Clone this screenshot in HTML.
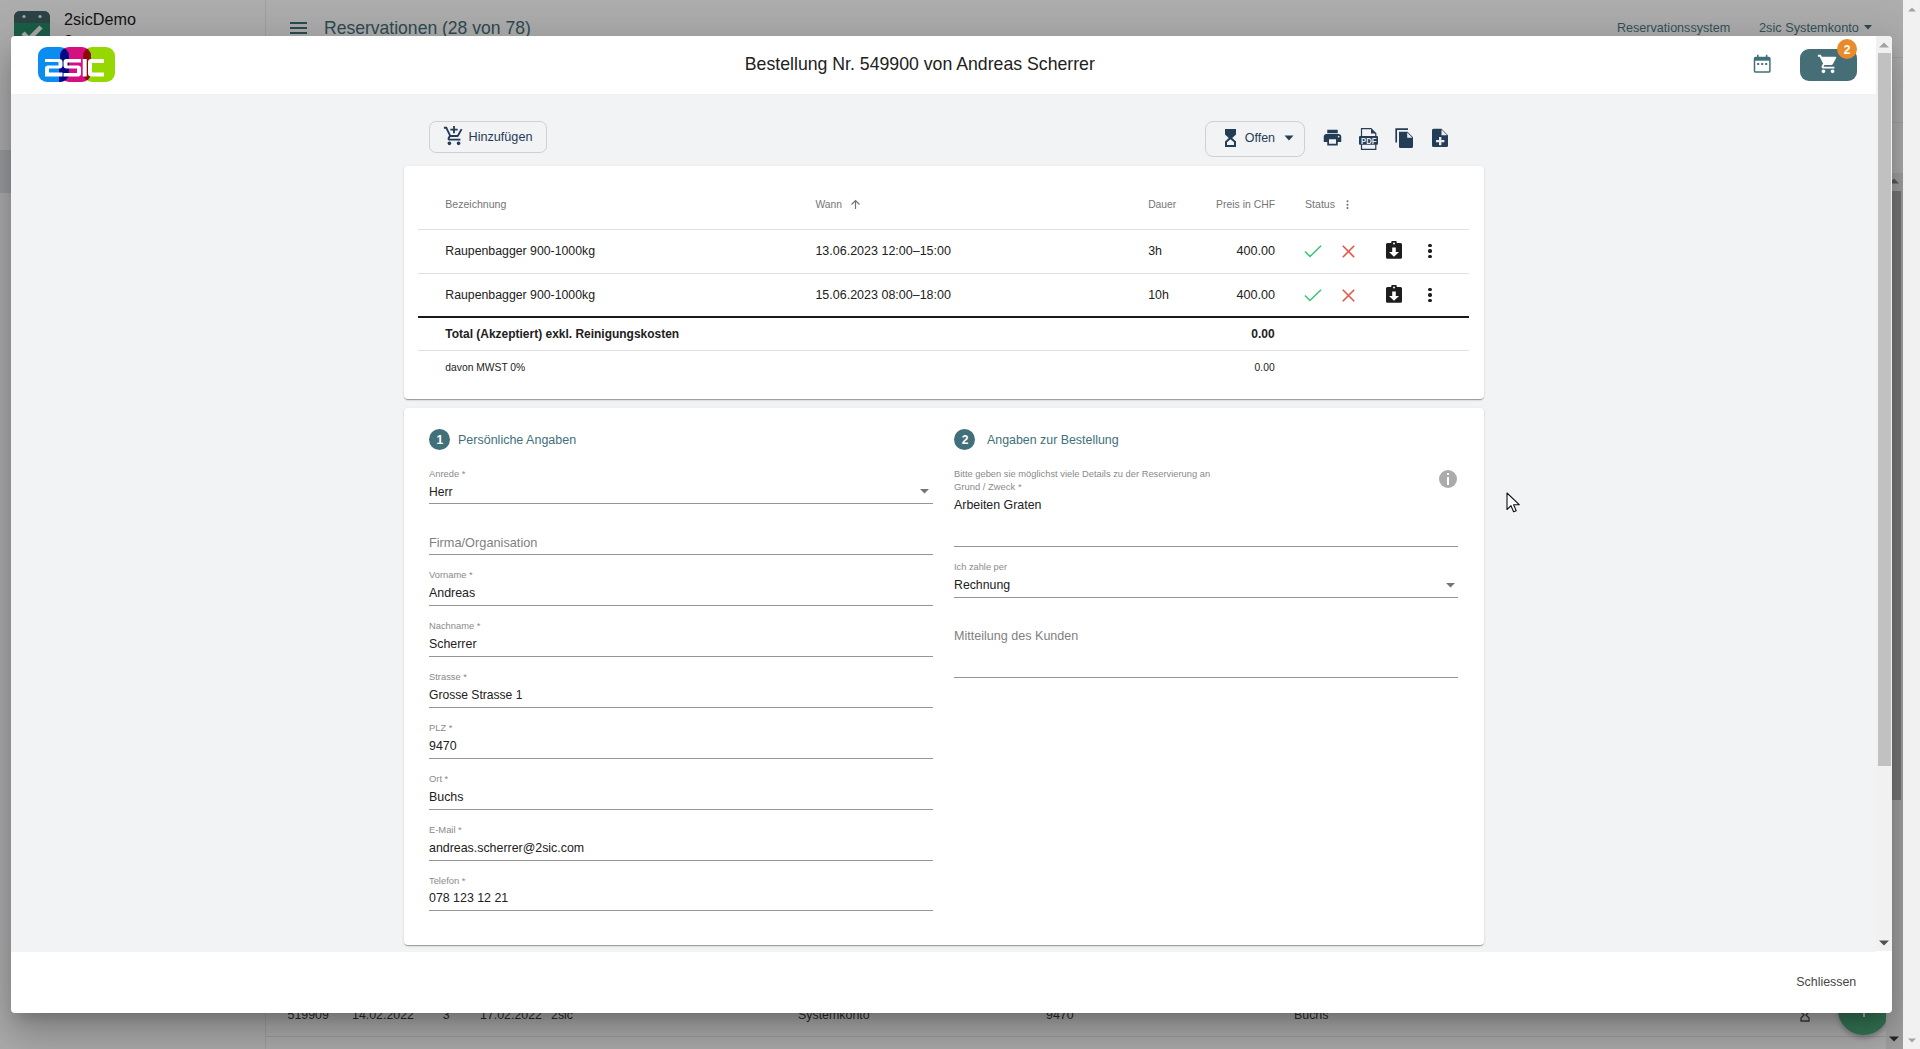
<!DOCTYPE html>
<html><head><meta charset="utf-8"><title>Bestellung</title>
<style>
html,body{margin:0;padding:0;width:1920px;height:1049px;overflow:hidden;background:#adadad;font-family:"Liberation Sans", sans-serif;}
.r{position:absolute;}
.t{position:absolute;line-height:20px;height:20px;white-space:nowrap;font-family:"Liberation Sans", sans-serif;}
</style></head><body>

<div class="r" style="left:0px;top:0px;width:1903px;height:1049px;background:#adadad;"></div>
<div class="r" style="left:0px;top:150px;width:265px;height:43px;background:#9a9c9f;"></div>
<div class="r" style="left:265px;top:0px;width:1px;height:1049px;background:#a0a0a0;"></div>
<div class="r" style="left:266px;top:57px;width:1637px;height:1px;background:#a2a2a2;"></div>
<div class="r" style="left:266px;top:122px;width:1637px;height:1px;background:#a2a2a2;"></div>
<div class="r" style="left:266px;top:173px;width:1637px;height:1px;background:#a2a2a2;"></div>
<svg class="r" style="left:14px;top:11px;" width="36" height="36" viewBox="0 0 36 36"><rect x="0" y="0" width="36" height="36" rx="6" fill="#1b5e47"/>
<path d="M6 0h24a6 6 0 0 1 6 6v6H0V6a6 6 0 0 1 6-6z" fill="#2c4346"/>
<circle cx="10" cy="5.5" r="1.6" fill="#a9a9a9"/><circle cx="26" cy="5.5" r="1.6" fill="#a9a9a9"/>
<path d="M9 22l6 6 12-12" stroke="#a9a9a9" stroke-width="4.5" fill="none"/></svg>
<div class="t" style="left:64px;top:9.39px;font-size:16.2px;color:#141414;font-weight:400;">2sicDemo</div>
<div class="t" style="left:64.5px;top:29.64px;font-size:12px;color:#141414;font-weight:400;">Sama</div>
<div class="r" style="left:290px;top:22px;width:17px;height:2px;background:#2b4b52;"></div>
<div class="r" style="left:290px;top:27px;width:17px;height:2px;background:#2b4b52;"></div>
<div class="r" style="left:290px;top:32px;width:17px;height:2px;background:#2b4b52;"></div>
<div class="t" style="left:324px;top:17.52px;font-size:17.56px;color:#2d4b53;font-weight:400;">Reservationen (28 von 78)</div>
<div class="t" style="left:1617px;top:17.64px;font-size:12.58px;color:#34525a;font-weight:400;">Reservationssystem</div>
<div class="t" style="left:1759px;top:17.58px;font-size:12.76px;color:#34525a;font-weight:400;">2sic Systemkonto</div>
<svg class="r" style="left:1864px;top:25px;" width="8" height="5" viewBox="0 0 8 5"><path d="M0 0h8L4 4.5z" fill="#2d4b53"/></svg>
<div class="t" style="left:287.5px;top:1005.20px;font-size:12.4px;color:#2a2a2a;font-weight:400;">519909</div>
<div class="t" style="left:352px;top:1005.20px;font-size:12.4px;color:#2a2a2a;font-weight:400;">14.02.2022</div>
<div class="t" style="left:442.7px;top:1005.20px;font-size:12.4px;color:#2a2a2a;font-weight:400;">3</div>
<div class="t" style="left:480px;top:1005.20px;font-size:12.4px;color:#2a2a2a;font-weight:400;">17.02.2022</div>
<div class="t" style="left:551px;top:1005.20px;font-size:12.4px;color:#2a2a2a;font-weight:400;">2sic</div>
<div class="t" style="left:798px;top:1005.20px;font-size:12.4px;color:#2a2a2a;font-weight:400;">Systemkonto</div>
<div class="t" style="left:1046px;top:1005.20px;font-size:12.4px;color:#2a2a2a;font-weight:400;">9470</div>
<div class="t" style="left:1294px;top:1005.20px;font-size:12.4px;color:#2a2a2a;font-weight:400;">Buchs</div>
<div class="r" style="left:266px;top:1036px;width:1620px;height:1px;background:#9c9c9c;"></div>
<svg class="r" style="left:1800px;top:1008px;" width="10" height="14" viewBox="0 0 10 14"><path d="M1 1h8v3L6 7l3 3v3H1v-3l3-3-3-3z" stroke="#3a3a3a" stroke-width="1.3" fill="none"/></svg>
<div class="r" style="left:1837.5px;top:984px;width:51px;height:51px;border-radius:50%;background:#357657;box-shadow:0 3px 5px rgba(0,0,0,.25)"></div>
<div class="r" style="left:1862.5px;top:1013px;width:2.0px;height:4px;background:#b5b5b5;"></div>
<div class="r" style="left:1886px;top:173px;width:17px;height:876px;background:#a1a1a1;"></div>
<div class="r" style="left:1888px;top:191px;width:13px;height:609px;background:#787878;"></div>
<svg class="r" style="left:1889px;top:178px;" width="10" height="6" viewBox="0 0 10 6"><path d="M0 5.5h10L5 0.5z" fill="#5a5a5a"/></svg>
<svg class="r" style="left:1889px;top:1036px;" width="10" height="6" viewBox="0 0 10 6"><path d="M0 0.5h10L5 5.5z" fill="#262626"/></svg>
<div class="r" style="left:11px;top:36px;width:1881px;height:977px;border-radius:4px;background:#fff;overflow:hidden;box-shadow:0 11px 15px -7px rgba(0,0,0,.2),0 24px 38px 3px rgba(0,0,0,.14),0 9px 46px 8px rgba(0,0,0,.12)">
<div class="r" style="left:0;top:58px;width:1865px;height:858px;background:#f2f3f5"></div>
</div>
<div class="r" style="left:1876px;top:36px;width:16px;height:915px;background:#f1f1f1;border-top-right-radius:4px;"></div>
<div class="r" style="left:1878px;top:53px;width:13px;height:713px;background:#c1c1c1;"></div>
<svg class="r" style="left:1879px;top:42px;" width="10" height="6" viewBox="0 0 10 6"><path d="M0 5.5h10L5 0.5z" fill="#a3a3a3"/></svg>
<svg class="r" style="left:1879px;top:940px;" width="10" height="6" viewBox="0 0 10 6"><path d="M0 0.5h10L5 5.5z" fill="#505050"/></svg>
<svg class="r" style="left:38px;top:47px;" width="77" height="35" viewBox="0 0 77 35">
<defs><clipPath id="cb"><rect x="0" y="0" width="31" height="35" rx="9"/></clipPath>
<clipPath id="cg"><rect x="45" y="0" width="32" height="35" rx="9"/></clipPath></defs>
<rect x="0" y="0" width="31" height="35" rx="9" fill="#0a8cf0"/>
<rect x="45" y="0" width="32" height="35" rx="9" fill="#97d700"/>
<rect x="22" y="0" width="31" height="35" rx="9" fill="#d50f7f"/>
<g clip-path="url(#cb)"><rect x="22" y="0" width="31" height="35" rx="9" fill="#000a85"/><rect x="21" y="18" width="11" height="17" fill="#000a85"/></g>
<g clip-path="url(#cg)"><rect x="22" y="0" width="31" height="35" rx="9" fill="#8a0d05"/></g>
<g fill="#fff">
<path d="M7 12h14.5a3 3 0 0 1 3 3v3.5a3 3 0 0 1-3 3H11v4h13.5v4H7v-8a3 3 0 0 1 3-3h10.5v-3.5H7z"/>
<path d="M43 12H28.5a3 3 0 0 0-3 3v3.5a3 3 0 0 0 3 3H39v4.5H25.5v3.5H40a3 3 0 0 0 3-3v-5a3 3 0 0 0-3-3H29.5v-3H43z"/>
<rect x="44.7" y="12" width="4" height="17.5"/>
<path d="M66 12H53a3 3 0 0 0-3 3v11.5a3 3 0 0 0 3 3h13v-4H54v-9.5h12z"/>
</g></svg>
<div class="t" style="left:744.8px;top:54.17px;font-size:17.7px;color:#212121;font-weight:400;">Bestellung Nr. 549900 von Andreas Scherrer</div>
<svg class="r" style="left:1753px;top:54px;" width="19" height="20" viewBox="0 0 19 20"><rect x="1.5" y="3.5" width="15.4" height="14.6" rx="1.2" stroke="#41707a" stroke-width="1.5" fill="none"/>
<rect x="1.5" y="3.5" width="15.4" height="3.2" fill="#41707a"/>
<rect x="4" y="0.8" width="1.6" height="3" fill="#41707a"/><rect x="12.8" y="0.8" width="1.6" height="3" fill="#41707a"/>
<rect x="4.2" y="9" width="2" height="2" fill="#41707a"/><rect x="8.2" y="9" width="2" height="2" fill="#41707a"/><rect x="12.2" y="9" width="2" height="2" fill="#41707a"/></svg>
<div class="r" style="left:1800px;top:49px;width:57px;height:32px;border-radius:9px;background:#456e76"></div>
<svg class="r" style="left:1817px;top:53px;" width="22" height="22" viewBox="0 0 24 24"><path fill="#fff" d="M7 18c-1.1 0-1.99.9-1.99 2S5.9 22 7 22s2-.9 2-2-.9-2-2-2zM1 2v2h2l3.6 7.59-1.35 2.45c-.16.28-.25.61-.25.96 0 1.1.9 2 2 2h12v-2H7.42c-.14 0-.25-.11-.25-.25l.03-.12.9-1.63h7.45c.75 0 1.41-.41 1.75-1.03l3.58-6.49A1.003 1.003 0 0 0 20 4H5.21l-.94-2H1zm16 16c-1.1 0-1.99.9-1.99 2s.89 2 1.99 2 2-.9 2-2-.9-2-2-2z"/></svg>
<div class="r" style="left:1837px;top:39px;width:20px;height:20px;border-radius:50%;background:#e98a2b"></div>
<div class="t" style="left:1847px;transform:translateX(-50%);top:39.84px;font-size:12px;color:#fff;font-weight:700;">2</div>
<div class="r" style="left:429px;top:121px;width:116px;height:30px;border:1px solid #cfd0d2;border-radius:7px"></div>
<svg class="r" style="left:443px;top:125px;" width="22" height="22" viewBox="0 0 24 24"><path fill="#1f3b57" d="M11 9h2V6h3V4h-3V1h-2v3H8v2h3v3zm-4 9c-1.1 0-1.99.9-1.99 2S5.9 22 7 22s2-.9 2-2-.9-2-2-2zm10 0c-1.1 0-1.99.9-1.99 2s.89 2 1.99 2 2-.9 2-2-.9-2-2-2zm-9.83-3.25l.03-.12.9-1.63h7.45c.75 0 1.41-.41 1.75-1.03l3.86-7.01L19.42 4h-.01l-1.1 2-2.76 5H8.53l-.13-.27L6.16 6l-.95-2-.94-2H1v2h2l3.6 7.59-1.35 2.45c-.16.28-.25.61-.25.96 0 1.1.9 2 2 2h12v-2H7.42c-.13 0-.25-.11-.25-.25z"/></svg>
<div class="t" style="left:468.5px;top:126.62px;font-size:12.65px;color:#1f3b57;font-weight:400;">Hinzufügen</div>
<div class="r" style="left:1205px;top:121px;width:98px;height:34px;border:1px solid #cfd0d2;border-radius:8px"></div>
<svg class="r" style="left:1225px;top:129px;" width="11" height="18" viewBox="0 0 11 18"><path fill="#243d57" d="M0 0h11v5.5L7.2 9 11 12.5V18H0v-5.5L3.8 9 0 5.5z"/><path fill="#f2f3f5" d="M2 13.3L5.5 10.2 9 13.3V16H2z"/></svg>
<div class="t" style="left:1244.7px;top:127.57px;font-size:12.5px;color:#243d57;font-weight:400;">Offen</div>
<svg class="r" style="left:1284px;top:135px;" width="10" height="6" viewBox="0 0 10 6"><path d="M0.5 0.5h9L5 5.5z" fill="#243d57"/></svg>
<svg class="r" style="left:1322px;top:127px;" width="21" height="21" viewBox="0 0 24 24"><path fill="#243d57" d="M19 8H5c-1.66 0-3 1.34-3 3v6h4v4h12v-4h4v-6c0-1.66-1.34-3-3-3zm-3 11H8v-5h8v5zm3-7c-.55 0-1-.45-1-1s.45-1 1-1 1 .45 1 1-.45 1-1 1zm-1-9H6v4h12V3z"/></svg>
<svg class="r" style="left:1358px;top:128px;" width="21" height="22" viewBox="0 0 21 22"><path d="M3.5 0.7h9.5l4.8 4.8V21.3H3.5z" fill="none" stroke="#243d57" stroke-width="1.2"/>
<path d="M13 0.7v4.8h4.8z" fill="#243d57"/>
<rect x="1" y="8" width="19" height="8.7" rx="1" fill="#243d57"/>
<text x="10.8" y="15.8" font-family="Liberation Sans" font-weight="700" font-size="9" fill="#e8eaee" text-anchor="middle" textLength="15.5" lengthAdjust="spacingAndGlyphs">PDF</text></svg>
<svg class="r" style="left:1394px;top:127px;" width="20" height="22" viewBox="0 0 20 22"><path d="M2.2 15.6V2.2H14" fill="none" stroke="#243d57" stroke-width="1.7"/><path fill="#243d57" d="M5 4.8h8.5L19 10.3v9.2a1.5 1.5 0 0 1-1.5 1.5h-11A1.5 1.5 0 0 1 5 19.5z"/><path fill="#e8eaee" d="M13.2 5.6v5.2h5.2z"/></svg>
<svg class="r" style="left:1432px;top:128px;" width="17" height="20" viewBox="0 0 17 20"><path fill="#243d57" d="M1.5 0.8H9.5L16 7.3V17.5a1.5 1.5 0 0 1-1.5 1.5h-13A1.5 1.5 0 0 1 0 17.5V2.3A1.5 1.5 0 0 1 1.5 0.8z"/><path fill="#e8eaee" d="M9.5 1.6v5.7h5.7z"/><path fill="#e8eaee" d="M7 9h2.4v3h3v2.2h-3v3H7v-3H4v-2.2h3z"/></svg>
<div class="r" style="left:404px;top:166px;width:1080px;height:233px;box-shadow:0 2px 1px -1px rgba(0,0,0,.2),0 1px 1px 0 rgba(0,0,0,.14),0 1px 3px 0 rgba(0,0,0,.12);border-radius:4px;background:#fff;"></div>
<div class="t" style="left:445.3px;top:194.34px;font-size:10.55px;color:#757575;font-weight:400;">Bezeichnung</div>
<div class="t" style="left:815.4px;top:195.03px;font-size:10.3px;color:#757575;font-weight:400;">Wann</div>
<svg class="r" style="left:850px;top:199px;" width="11" height="11" viewBox="0 0 11 11"><path d="M5.5 10V1.5M1.5 5.5l4-4 4 4" stroke="#757575" stroke-width="1.2" fill="none"/></svg>
<div class="t" style="left:1148.2px;top:195.03px;font-size:10.3px;color:#757575;font-weight:400;">Dauer</div>
<div class="t" style="right:645px;top:195.00px;font-size:10.4px;color:#757575;font-weight:400;">Preis in CHF</div>
<div class="t" style="left:1305px;top:194.33px;font-size:10.6px;color:#757575;font-weight:400;">Status</div>
<svg class="r" style="left:1346px;top:200px;" width="3" height="10" viewBox="0 0 3 10"><circle cx="1.5" cy="1.3" r="1" fill="#6a6a6a"/><circle cx="1.5" cy="4.7" r="1" fill="#6a6a6a"/><circle cx="1.5" cy="8.1" r="1" fill="#6a6a6a"/></svg>
<div class="r" style="left:418px;top:229px;width:1051px;height:1px;background:#e0e0e0;"></div>
<div class="r" style="left:418px;top:273px;width:1051px;height:1px;background:#e0e0e0;"></div>
<div class="t" style="left:445.3px;top:240.84px;font-size:12.3px;color:#212121;font-weight:400;">Raupenbagger 900-1000kg</div>
<div class="t" style="left:815.4px;top:241.47px;font-size:12.5px;color:#212121;font-weight:400;">13.06.2023 12:00–15:00</div>
<div class="t" style="left:1148.2px;top:240.80px;font-size:12.4px;color:#212121;font-weight:400;">3h</div>
<div class="t" style="right:645px;top:241.43px;font-size:12.6px;color:#212121;font-weight:400;">400.00</div>
<svg class="r" style="left:1304px;top:245px;" width="18" height="13" viewBox="0 0 18 13"><path d="M1 6.5l5 5L17 0.8" stroke="#3cc47c" stroke-width="1.6" fill="none"/></svg>
<svg class="r" style="left:1342px;top:245px;" width="13" height="13" viewBox="0 0 13 13"><path d="M0.8 0.8l11.4 11.4M12.2 0.8L0.8 12.2" stroke="#e8534a" stroke-width="1.6" fill="none"/></svg>
<svg class="r" style="left:1385px;top:241px;" width="18" height="19" viewBox="0 0 18 19"><path fill="#1d1d1d" d="M2.5 2h3.7a2.8 2.8 0 0 1 5.6 0h3.7a1.5 1.5 0 0 1 1.5 1.5V16.3a1.5 1.5 0 0 1-1.5 1.5H2.5A1.5 1.5 0 0 1 1 16.3V3.5A1.5 1.5 0 0 1 2.5 2z"/><circle cx="9" cy="2.4" r="1" fill="#fff"/><path fill="#fff" d="M7.2 6.6h3.6V11h3.2L9 15.8 4 11h3.2z"/></svg>
<div class="r" style="left:1428.4px;top:243.70px;width:3.4px;height:3.4px;border-radius:50%;background:#1d1d1d"></div>
<div class="r" style="left:1428.4px;top:249.30px;width:3.4px;height:3.4px;border-radius:50%;background:#1d1d1d"></div>
<div class="r" style="left:1428.4px;top:254.90px;width:3.4px;height:3.4px;border-radius:50%;background:#1d1d1d"></div>
<div class="t" style="left:445.3px;top:284.84px;font-size:12.3px;color:#212121;font-weight:400;">Raupenbagger 900-1000kg</div>
<div class="t" style="left:815.4px;top:285.47px;font-size:12.5px;color:#212121;font-weight:400;">15.06.2023 08:00–18:00</div>
<div class="t" style="left:1148.2px;top:284.80px;font-size:12.4px;color:#212121;font-weight:400;">10h</div>
<div class="t" style="right:645px;top:285.43px;font-size:12.6px;color:#212121;font-weight:400;">400.00</div>
<svg class="r" style="left:1304px;top:289px;" width="18" height="13" viewBox="0 0 18 13"><path d="M1 6.5l5 5L17 0.8" stroke="#3cc47c" stroke-width="1.6" fill="none"/></svg>
<svg class="r" style="left:1342px;top:289px;" width="13" height="13" viewBox="0 0 13 13"><path d="M0.8 0.8l11.4 11.4M12.2 0.8L0.8 12.2" stroke="#e8534a" stroke-width="1.6" fill="none"/></svg>
<svg class="r" style="left:1385px;top:285px;" width="18" height="19" viewBox="0 0 18 19"><path fill="#1d1d1d" d="M2.5 2h3.7a2.8 2.8 0 0 1 5.6 0h3.7a1.5 1.5 0 0 1 1.5 1.5V16.3a1.5 1.5 0 0 1-1.5 1.5H2.5A1.5 1.5 0 0 1 1 16.3V3.5A1.5 1.5 0 0 1 2.5 2z"/><circle cx="9" cy="2.4" r="1" fill="#fff"/><path fill="#fff" d="M7.2 6.6h3.6V11h3.2L9 15.8 4 11h3.2z"/></svg>
<div class="r" style="left:1428.4px;top:287.70px;width:3.4px;height:3.4px;border-radius:50%;background:#1d1d1d"></div>
<div class="r" style="left:1428.4px;top:293.30px;width:3.4px;height:3.4px;border-radius:50%;background:#1d1d1d"></div>
<div class="r" style="left:1428.4px;top:298.90px;width:3.4px;height:3.4px;border-radius:50%;background:#1d1d1d"></div>
<div class="r" style="left:418px;top:316px;width:1051px;height:2px;background:#1a1a1a;"></div>
<div class="t" style="left:445.3px;top:324.15px;font-size:11.97px;color:#212121;font-weight:700;">Total (Akzeptiert) exkl. Reinigungskosten</div>
<div class="t" style="right:645.4000000000001px;top:323.64px;font-size:12.0px;color:#212121;font-weight:700;">0.00</div>
<div class="r" style="left:418px;top:350px;width:1051px;height:1px;background:#e0e0e0;"></div>
<div class="t" style="left:445.3px;top:357.53px;font-size:10.3px;color:#212121;font-weight:400;">davon MWST 0%</div>
<div class="t" style="right:645.4000000000001px;top:358.03px;font-size:10.3px;color:#212121;font-weight:400;">0.00</div>
<div class="r" style="left:404px;top:408px;width:1080px;height:537px;box-shadow:0 2px 1px -1px rgba(0,0,0,.2),0 1px 1px 0 rgba(0,0,0,.14),0 1px 3px 0 rgba(0,0,0,.12);border-radius:4px;background:#fff;"></div>
<div class="r" style="left:429px;top:429px;width:21px;height:21px;border-radius:50%;background:#41707a"></div>
<div class="t" style="left:439.8px;transform:translateX(-50%);top:430.04px;font-size:12px;color:#fff;font-weight:700;">1</div>
<div class="t" style="left:458px;top:429.67px;font-size:12.5px;color:#41707a;font-weight:400;">Persönliche Angaben</div>
<div class="r" style="left:954px;top:429px;width:21px;height:21px;border-radius:50%;background:#41707a"></div>
<div class="t" style="left:965px;transform:translateX(-50%);top:430.04px;font-size:12px;color:#fff;font-weight:700;">2</div>
<div class="t" style="left:987px;top:429.70px;font-size:12.4px;color:#41707a;font-weight:400;">Angaben zur Bestellung</div>
<div class="t" style="left:429px;top:464.26px;font-size:9.35px;color:#8a8a8a;font-weight:400;">Anrede *</div>
<div class="t" style="left:429px;top:481.61px;font-size:12.1px;color:#212121;font-weight:400;">Herr</div>
<div class="r" style="left:429px;top:503px;width:504px;height:1px;background:#959595;"></div>
<div class="t" style="left:429px;top:532.78px;font-size:12.75px;color:#7f7f7f;font-weight:400;">Firma/Organisation</div>
<div class="r" style="left:429px;top:554px;width:504px;height:1px;background:#959595;"></div>
<div class="t" style="left:429px;top:565.26px;font-size:9.35px;color:#8a8a8a;font-weight:400;">Vorname *</div>
<div class="t" style="left:429px;top:582.50px;font-size:12.4px;color:#212121;font-weight:400;">Andreas</div>
<div class="r" style="left:429px;top:605px;width:504px;height:1px;background:#959595;"></div>
<div class="t" style="left:429px;top:616.26px;font-size:9.35px;color:#8a8a8a;font-weight:400;">Nachname *</div>
<div class="t" style="left:429px;top:633.50px;font-size:12.4px;color:#212121;font-weight:400;">Scherrer</div>
<div class="r" style="left:429px;top:656px;width:504px;height:1px;background:#959595;"></div>
<div class="t" style="left:429px;top:667.26px;font-size:9.35px;color:#8a8a8a;font-weight:400;">Strasse *</div>
<div class="t" style="left:429px;top:684.61px;font-size:12.1px;color:#212121;font-weight:400;">Grosse Strasse 1</div>
<div class="r" style="left:429px;top:707px;width:504px;height:1px;background:#959595;"></div>
<div class="t" style="left:429px;top:718.26px;font-size:9.35px;color:#8a8a8a;font-weight:400;">PLZ *</div>
<div class="t" style="left:429px;top:735.50px;font-size:12.4px;color:#212121;font-weight:400;">9470</div>
<div class="r" style="left:429px;top:758px;width:504px;height:1px;background:#959595;"></div>
<div class="t" style="left:429px;top:769.26px;font-size:9.35px;color:#8a8a8a;font-weight:400;">Ort *</div>
<div class="t" style="left:429px;top:786.50px;font-size:12.4px;color:#212121;font-weight:400;">Buchs</div>
<div class="r" style="left:429px;top:809px;width:504px;height:1px;background:#959595;"></div>
<div class="t" style="left:429px;top:820.26px;font-size:9.35px;color:#8a8a8a;font-weight:400;">E-Mail *</div>
<div class="t" style="left:429px;top:837.50px;font-size:12.4px;color:#212121;font-weight:400;">andreas.scherrer@2sic.com</div>
<div class="r" style="left:429px;top:860px;width:504px;height:1px;background:#959595;"></div>
<div class="t" style="left:429px;top:871.26px;font-size:9.35px;color:#8a8a8a;font-weight:400;">Telefon *</div>
<div class="t" style="left:429px;top:887.50px;font-size:12.4px;color:#212121;font-weight:400;">078 123 12 21</div>
<div class="r" style="left:429px;top:910px;width:504px;height:1px;background:#959595;"></div>
<svg class="r" style="left:920px;top:489px;" width="9" height="5" viewBox="0 0 9 5"><path d="M0 0h9L4.5 4.5z" fill="#757575"/></svg>
<div class="t" style="left:954px;top:463.66px;font-size:9.34px;color:#8a8a8a;font-weight:400;">Bitte geben sie möglichst viele Details zu der Reservierung an</div>
<div class="t" style="left:954px;top:476.73px;font-size:9.43px;color:#8a8a8a;font-weight:400;">Grund / Zweck *</div>
<div class="t" style="left:954px;top:494.70px;font-size:12.4px;color:#212121;font-weight:400;">Arbeiten Graten</div>
<div class="r" style="left:954px;top:546px;width:504px;height:1px;background:#959595;"></div>
<div class="r" style="left:1439px;top:470px;width:18px;height:18px;border-radius:50%;background:#ababab"></div>
<div class="r" style="left:1446.8px;top:476.5px;width:2.400000000000091px;height:8.0px;background:#fff;"></div>
<div class="r" style="left:1446.8px;top:472.5px;width:2.400000000000091px;height:2.3000000000000114px;background:#fff;"></div>
<div class="t" style="left:954px;top:556.79px;font-size:9.26px;color:#8a8a8a;font-weight:400;">Ich zahle per</div>
<div class="t" style="left:954px;top:574.74px;font-size:12.3px;color:#212121;font-weight:400;">Rechnung</div>
<div class="r" style="left:954px;top:597px;width:504px;height:1px;background:#959595;"></div>
<svg class="r" style="left:1446px;top:583px;" width="9" height="5" viewBox="0 0 9 5"><path d="M0 0h9L4.5 4.5z" fill="#757575"/></svg>
<div class="t" style="left:954px;top:625.64px;font-size:12.57px;color:#7f7f7f;font-weight:400;">Mitteilung des Kunden</div>
<div class="r" style="left:954px;top:677px;width:504px;height:1px;background:#959595;"></div>
<svg class="r" style="left:1506px;top:492px;" width="14" height="22" viewBox="0 0 14 22"><path d="M1 1v16.5l4-3.8 2.6 6.1 2.6-1.1-2.6-6h5.6z" fill="#fff" stroke="#111" stroke-width="1.1" stroke-linejoin="round"/></svg>
<div class="t" style="left:1796.3px;top:971.50px;font-size:12.4px;color:#464646;font-weight:400;">Schliessen</div>
<div class="r" style="left:1903px;top:0px;width:17px;height:1049px;background:#f1f1f1;"></div>
<svg class="r" style="left:1907.5px;top:6.5px;" width="8" height="5" viewBox="0 0 8 5"><path d="M0 4.5h8L4 0.5z" fill="#a3a3a3"/></svg>
<svg class="r" style="left:1907.5px;top:1037.5px;" width="8" height="5" viewBox="0 0 8 5"><path d="M0 0.5h8L4 4.5z" fill="#a3a3a3"/></svg>
</body></html>
